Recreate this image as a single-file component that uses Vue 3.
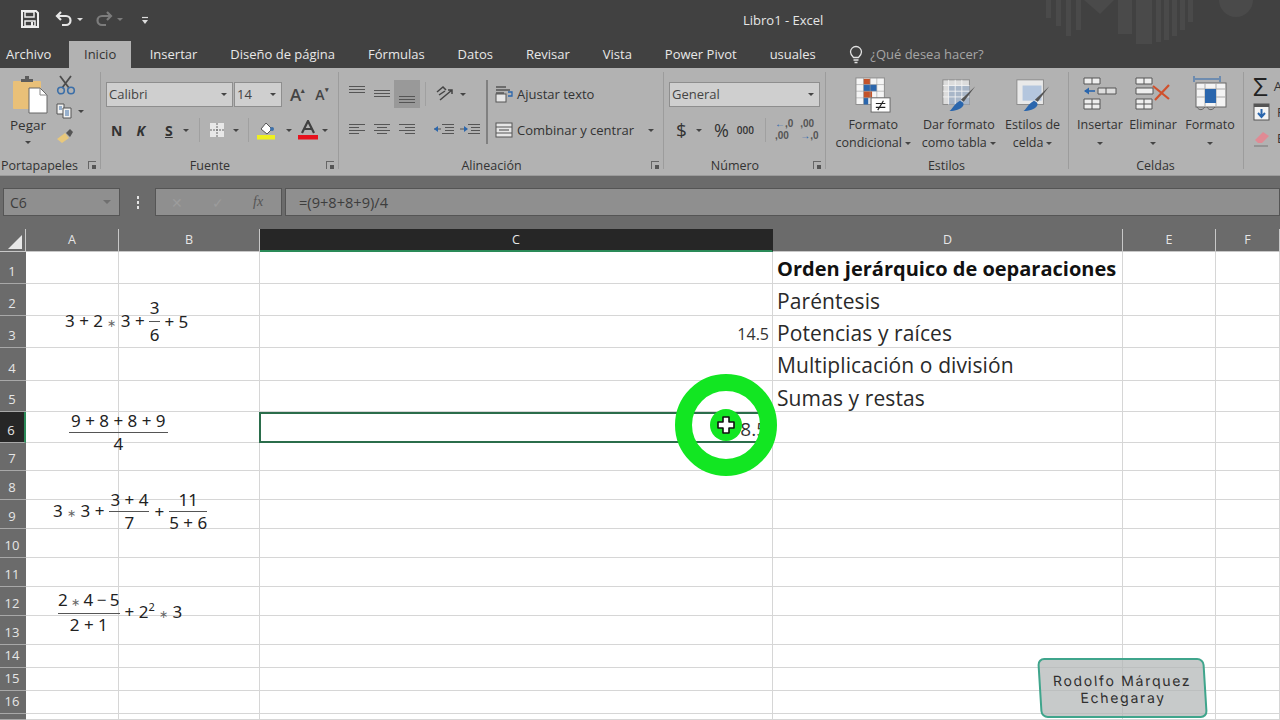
<template>
  <div class="app">
    <header class="titlebar">
      <div class="qat">
        <svg class="q-save" width="20" height="20" viewBox="0 0 20 20"><path d="M2 2h14l2 2v14H2z" fill="none" stroke="#eee" stroke-width="2"/><path d="M5 3h9v5H5zM5 12h10v5H5z" fill="none" stroke="#eee" stroke-width="1.5"/><rect x="11" y="13" width="2" height="4" fill="#eee"/></svg>
        <svg class="q-undo" width="20" height="18" viewBox="0 0 20 18"><path d="M7 2 3 6l4 4M3 6h9a4.5 4.5 0 0 1 0 9H8" fill="none" stroke="#e6e6e6" stroke-width="2.2"/></svg>
        <span class="mini-caret"></span>
        <svg class="q-redo" width="20" height="18" viewBox="0 0 20 18"><path d="M13 2l4 4-4 4M17 6H8a4.5 4.5 0 0 0 0 9h4" fill="none" stroke="#7c7c7c" stroke-width="2.2"/></svg>
        <span class="mini-caret dim"></span>
        <svg class="q-more" width="8" height="9" viewBox="0 0 8 9"><path d="M1 1.5h6" stroke="#ddd" stroke-width="1.2"/><path d="M1 4h6L4 8z" fill="#ddd"/></svg>
      </div>
      <div class="doc-title">Libro1 - Excel</div>
      <svg class="deco" width="240" height="46" viewBox="0 0 240 46">
        <g fill="#4a4a4a">
          <rect x="6" y="0" width="5" height="18"/><rect x="16" y="0" width="5" height="26"/><rect x="26" y="0" width="5" height="36"/><rect x="36" y="0" width="5" height="30"/>
          <path d="M44 0h30l-14 14z"/>
          <rect x="78" y="0" width="14" height="34"/><rect x="96" y="0" width="16" height="44"/><rect x="116" y="0" width="5" height="42"/><rect x="124" y="0" width="5" height="40"/><rect x="132" y="0" width="5" height="36"/><rect x="140" y="0" width="5" height="30"/><rect x="148" y="0" width="5" height="22"/>
          <circle cx="196" cy="0" r="17"/>
        </g>
      </svg>
    </header>

    <nav class="tabs">
      <span class="tab-file">Archivo</span>
      <span class="tab active">Inicio</span>
      <span v-for="t in tabs" :key="t" class="tab">{{ t }}</span>
      <span class="tell">
        <svg width="14" height="19" viewBox="0 0 14 19"><path d="M4.5 12.5C3 11 1.5 9.5 1.5 7a5.5 5.5 0 0 1 11 0c0 2.5-1.5 4-3 5.5z" fill="none" stroke="#e2e2e2" stroke-width="1.3"/><path d="M4.5 15h5M5.5 17.5h3" stroke="#e2e2e2" stroke-width="1.3"/></svg>
        <em>¿Qué desea hacer?</em>
      </span>
    </nav>

    <section class="ribbon">
      <div class="group g-clip">
        <div class="clip-body">
          <div class="paste">
            <svg width="36" height="38" viewBox="0 0 36 38">
              <rect x="1" y="5" width="28" height="28" rx="1" fill="#e9c078"/>
              <path d="M9 6V3h4V0h4v3h4v3z" fill="#5c5c5c"/>
              <path d="M17 12h11l7 7v18H17z" fill="#fff" stroke="#666"/>
              <path d="M28 12v7h7" fill="none" stroke="#888"/>
            </svg>
            <span>Pegar</span>
            <i class="caret"></i>
          </div>
          <div class="clip-tools">
            <svg width="20" height="20" viewBox="0 0 20 20"><path d="M4 1l9 12M15 1 6 13" stroke="#4d4d4d" stroke-width="1.8"/><circle cx="5" cy="15.5" r="3.3" fill="none" stroke="#3c6fa8" stroke-width="1.6"/><circle cx="15" cy="15.5" r="3.3" fill="none" stroke="#3c6fa8" stroke-width="1.6"/></svg>
            <div class="copy-row">
              <svg width="16" height="16" viewBox="0 0 16 16"><path d="M1 1h7v10H1z" fill="#f2f2f2" stroke="#555"/><path d="M7 5h8v10H7z" fill="#f2f2f2" stroke="#555"/><path d="M9 8h4M9 10h4M9 12h4M3 4h3M3 6h3" stroke="#3c6fa8"/></svg>
              <i class="caret"></i>
            </div>
            <svg width="20" height="17" viewBox="0 0 20 17"><path d="M1 12l8-6 4 5-7 5z" fill="#e8c87c"/><path d="M10 6l4-4 3 3-3 5z" fill="#555"/></svg>
          </div>
        </div>
        <div class="group-label left">Portapapeles<i class="launcher"></i></div>
      </div>

      <div class="group g-font">
        <div class="row r1">
          <div class="select s-font">Calibri<i class="caret"></i></div>
          <div class="select s-size">14<i class="caret"></i></div>
          <span class="grow-a">A<sup>▴</sup></span>
          <span class="shrink-a">A<sup>▾</sup></span>
        </div>
        <div class="row r2">
          <b class="fmt f-n">N</b>
          <b class="fmt f-k">K</b>
          <b class="fmt f-s">S</b>
          <i class="caret c1"></i>
          <span class="vsep v1"></span>
          <svg class="ic-border" width="16" height="16" viewBox="0 0 16 16"><rect x="1" y="1" width="14" height="14" fill="#e8e8e8"/><path d="M8 1v14M1 8h14" stroke="#666" stroke-dasharray="2 1"/></svg>
          <i class="caret c2"></i>
          <span class="vsep v2"></span>
          <svg class="ic-fill" width="20" height="20" viewBox="0 0 20 20"><path d="M5 9l5-6 6 6-5 5z" fill="#fff" stroke="#555"/><circle cx="16" cy="9" r="2" fill="#3c6fa8"/><rect x="1" y="15" width="18" height="4.5" fill="#eef020"/></svg>
          <i class="caret c3"></i>
          <svg class="ic-color" width="20" height="20" viewBox="0 0 20 20"><path d="M4 13 10 1l6 12M6.5 9h7" fill="none" stroke="#404040" stroke-width="2.2"/><rect x="0" y="15" width="20" height="4.5" fill="#e8101c"/></svg>
          <i class="caret c4"></i>
        </div>
        <div class="group-label shift">Fuente<i class="launcher"></i></div>
      </div>

      <div class="group g-align">
        <div class="align-body">
          <div class="align-left">
            <div class="row r1">
              <svg class="lines" width="16" height="22" viewBox="0 0 16 22"><path d="M0 3.5h16M0 6.5h16M0 9.5h16" stroke="#555" stroke-width="1"/></svg>
              <svg class="lines" width="16" height="22" viewBox="0 0 16 22"><path d="M0 7.5h16M0 10.5h16M0 13.5h16" stroke="#555" stroke-width="1"/></svg>
              <span class="active-tool"><svg class="lines" width="16" height="22" viewBox="0 0 16 22"><path d="M0 13.5h16M0 16.5h16M0 19.5h16" stroke="#555" stroke-width="1"/></svg></span>
              <span class="vsep v3"></span>
              <svg class="ic-orient" width="20" height="18" viewBox="0 0 20 18"><path d="M2 7l6-5 3 3M4 10l6-4M5 15 17 5M13 5h4v4" fill="none" stroke="#444" stroke-width="1.5"/></svg>
              <i class="caret"></i>
            </div>
            <div class="row r2">
              <svg class="lines" width="16" height="14" viewBox="0 0 16 14"><path d="M0 1.5h16M0 4.5h10M0 7.5h16M0 10.5h10" stroke="#555"/></svg>
              <svg class="lines" width="16" height="14" viewBox="0 0 16 14"><path d="M0 1.5h16M3 4.5h10M0 7.5h16M3 10.5h10" stroke="#555"/></svg>
              <svg class="lines" width="16" height="14" viewBox="0 0 16 14"><path d="M0 1.5h16M6 4.5h10M0 7.5h16M6 10.5h10" stroke="#555"/></svg>
              <svg class="ic-indent" width="20" height="14" viewBox="0 0 20 14"><path d="M8 1.5h12M11 4.5h9M11 7.5h9M8 10.5h12M0 6h7" stroke="#555"/><path d="M0 6l4-3v6z" fill="#2a66ad"/></svg>
              <svg class="ic-indent2" width="20" height="14" viewBox="0 0 20 14"><path d="M8 1.5h12M11 4.5h9M11 7.5h9M8 10.5h12M0 6h6" stroke="#555"/><path d="M8 6 4 3v6z" fill="#2a66ad"/></svg>
            </div>
          </div>
          <span class="align-sep"></span>
          <div class="align-right">
            <div class="row r1 cmd">
              <svg width="18" height="18" viewBox="0 0 18 18"><path d="M1 2h10M1 5h14M1 8h8" stroke="#555" stroke-width="1.3"/><rect x="1" y="9" width="10" height="8" fill="#e6e6e6" stroke="#555"/><path d="M13 7h4v4h-4" fill="none" stroke="#2a66ad" stroke-width="1.3"/></svg>
              <span>Ajustar texto</span>
            </div>
            <div class="row r2 cmd">
              <svg width="18" height="16" viewBox="0 0 18 16"><rect x="1" y="1" width="16" height="14" fill="#e6e6e6" stroke="#555"/><path d="M1 5h16M1 11h16" stroke="#555"/><path d="M4 8h10" stroke="#444"/></svg>
              <span>Combinar y centrar</span>
              <i class="caret c-merge"></i>
            </div>
          </div>
        </div>
        <div class="group-label shift">Alineación<i class="launcher"></i></div>
      </div>

      <div class="group g-num">
        <div class="row r1"><div class="select s-num">General<i class="caret"></i></div></div>
        <div class="row r2">
          <span class="n-dollar">$</span>
          <i class="caret"></i>
          <span class="n-pct">%</span>
          <span class="n-mil">000</span>
          <span class="vsep v4"></span>
          <span class="n-dec"><u>←</u>,0<br>,00</span>
          <span class="n-dec two">,00<br><u>→</u>,0</span>
        </div>
        <div class="group-label shift">Número<i class="launcher"></i></div>
      </div>

      <div class="group g-styles">
        <div class="big-row">
          <div class="big b-cond">
            <svg width="36" height="36" viewBox="0 0 38 38">
              <rect x="1" y="1" width="30" height="28" fill="#f5f5f5" stroke="#8a8a8a"/>
              <rect x="9" y="2" width="7" height="6" fill="#c4532a"/><rect x="9" y="8" width="14" height="7" fill="#2a66ad"/><rect x="9" y="15" width="9" height="7" fill="#c4532a"/><rect x="9" y="22" width="5" height="7" fill="#2a66ad"/>
              <path d="M1 8h30M1 15h30M1 22h30M9 1v28M16 1v28M23 1v28" stroke="#9a9a9a" stroke-width=".6"/>
              <rect x="17" y="22" width="20" height="15" fill="#fff" stroke="#666"/>
              <path d="M22 28h10M22 32h10M30 25l-6 10" stroke="#222" stroke-width="1.2"/>
            </svg>
            <span>Formato</span><span class="wide">condicional<i class="caret"></i></span>
          </div>
          <div class="big b-table">
            <svg width="36" height="36" viewBox="0 0 38 38">
              <rect x="2" y="3" width="28" height="26" fill="#dcdcdc" stroke="#8a8a8a"/>
              <rect x="8" y="9" width="22" height="20" fill="#a8b6c8"/>
              <path d="M2 9h28M2 15h28M2 21h28M8 3v26M15 3v26M22 3v26" stroke="#f4f4f4" stroke-width=".9"/>
              <path d="M36 10 24 26l-3-2z" fill="#555"/><path d="M20 25c3 1 5 3 3 6-2 3-8 5-14 5 3-2 4-7 11-11z" fill="#2a66ad"/>
            </svg>
            <span>Dar formato</span><span class="wide">como tabla<i class="caret"></i></span>
          </div>
          <div class="big b-cell">
            <svg width="36" height="36" viewBox="0 0 38 38">
              <rect x="2" y="3" width="28" height="26" fill="#e9e9e9" stroke="#8a8a8a"/>
              <rect x="8" y="9" width="20" height="16" fill="#b4c6de"/>
              <path d="M36 10 24 26l-3-2z" fill="#555"/><path d="M20 25c3 1 5 3 3 6-2 3-8 5-14 5 3-2 4-7 11-11z" fill="#2a66ad"/>
            </svg>
            <span>Estilos de</span><span class="wide">celda<i class="caret"></i></span>
          </div>
        </div>
        <div class="group-label">Estilos</div>
      </div>

      <div class="group g-cells">
        <div class="big-row">
          <div class="big b-ins">
            <svg width="34" height="34" viewBox="0 0 34 34">
              <path d="M1 1h16v6H1zM9 1v6M1 22h16v10H1zM1 27h16M9 22v10" fill="#eee" stroke="#555"/>
              <path d="M15 11h18v6H15zM23 11v6" fill="#ddd" stroke="#555"/>
              <path d="M2 14h10" stroke="#2a66ad" stroke-width="1.6"/><path d="M1 14l5-3.5v7z" fill="#2a66ad"/>
            </svg>
            <span>Insertar</span><i class="caret"></i>
          </div>
          <div class="big b-del">
            <svg width="36" height="34" viewBox="0 0 36 34">
              <path d="M1 1h16v6H1zM9 1v6M1 22h16v10H1zM1 27h16M9 22v10M1 11h17v6H1z" fill="#eee" stroke="#555"/>
              <path d="M18 9 34 22M34 8 20 23" stroke="#d0502c" stroke-width="2.2"/>
            </svg>
            <span>Eliminar</span><i class="caret"></i>
          </div>
          <div class="big b-form">
            <svg width="34" height="38" viewBox="0 0 34 38">
              <path d="M1 1v6M27 1v6M2 4h24" stroke="#2a66ad"/>
              <rect x="3" y="8" width="30" height="24" fill="#f4f4f4" stroke="#666"/>
              <path d="M3 14h30M3 22h30M12 8v24M23 8v24" stroke="#aaa"/>
              <rect x="12" y="14" width="11" height="14" fill="#2a66ad"/>
              <path d="M4 32c2 4 6 3 8 0M14 32c2 4 6 3 8 0" fill="none" stroke="#666"/>
            </svg>
            <span>Formato</span><i class="caret"></i>
          </div>
        </div>
        <div class="group-label">Celdas</div>
      </div>

      <div class="group g-edit">
        <div class="edit-line e1"><span class="sigma">Σ</span><span>A</span></div>
        <div class="edit-line">
          <svg width="18" height="18" viewBox="0 0 18 18"><rect x="1" y="1" width="15" height="16" fill="#f4f4f4" stroke="#555"/><rect x="1" y="1" width="15" height="3" fill="#555"/><path d="M8.5 6v7M5 10l3.5 4 3.5-4" fill="none" stroke="#2a66ad" stroke-width="2"/></svg>
          <span>R</span>
        </div>
        <div class="edit-line">
          <svg width="18" height="18" viewBox="0 0 18 18"><path d="M2 11 10 3l6 4-7 7H5z" fill="#e08a94"/><path d="M1 17h14" stroke="#777"/></svg>
          <span>B</span>
        </div>
      </div>
    </section>

    <section class="formula-bar">
      <div class="name-box">C6<i class="caret dark"></i></div>
      <div class="dots"><i></i><i></i><i></i></div>
      <div class="fx-box">
        <span class="fx-x">✕</span>
        <span class="fx-ok">✓</span>
        <span class="fx">fx</span>
      </div>
      <div class="formula">=(9+8+8+9)/4</div>
    </section>

    <section class="sheet-wrap">
      <div class="sheet">
        <div class="corner"><span class="tri"></span></div>
        <div v-for="c in cols" :key="c" class="col-head" :class="{ sel: c === 'C' }">{{ c }}</div>
        <template v-for="r in rows" :key="r">
          <div class="row-head" :class="{ sel: r === 6 }">{{ r < 17 ? r : '' }}</div>
          <div v-for="c in cols" :key="c" class="cell" :class="[cellClass(r, c)]">{{ cellText(r, c) }}</div>
        </template>
      </div>

      <!-- equations are pictures floating above the grid -->
      <div class="eq eq1">
        <span>3 + 2 <i class="star">∗</i> 3 +</span>
        <span class="frac small"><span>3</span><span>6</span></span>
        <span>+ 5</span>
      </div>
      <div class="eq eq2">
        <span class="frac"><span>9 + 8 + 8 + 9</span><span>4</span></span>
      </div>
      <div class="eq eq3">
        <span>3 <i class="star">∗</i> 3 +</span>
        <span class="frac"><span>3 + 4</span><span>7</span></span>
        <span>+</span>
        <span class="frac"><span>11</span><span>5 + 6</span></span>
      </div>
      <div class="eq eq4">
        <span class="frac"><span>2 <i class="star">∗</i> 4 − 5</span><span>2 + 1</span></span>
        <span>+ 2<sup>2</sup> <i class="star">∗</i> 3</span>
      </div>

      <div class="click-ring">
        <span class="click-dot"></span>
        <svg class="cross" width="20" height="20" viewBox="0 0 20 20"><path d="M7 2h6v5h5v6h-5v5H7v-5H2V7h5z" fill="#fff" stroke="#111" stroke-width="1.6" stroke-linejoin="round"/></svg>
      </div>

      <div class="stamp">Rodolfo Márquez<br>Echegaray</div>
    </section>
  </div>
</template>

<script setup>
const tabs = ['Insertar', 'Diseño de página', 'Fórmulas', 'Datos', 'Revisar', 'Vista', 'Power Pivot', 'usuales']
const cols = ['A', 'B', 'C', 'D', 'E', 'F']
const rows = Array.from({ length: 17 }, (_, i) => i + 1)

const texts = {
  D1: 'Orden jerárquico de oeparaciones',
  D2: 'Paréntesis',
  D3: 'Potencias y raíces',
  C3: '14.5',
  D4: 'Multiplicación o división',
  D5: 'Sumas y restas',
  C6: '8.5'
}

const cellText = (r, c) => texts[c + r] || ''

const cellClass = (r, c) => {
  if (c + r === 'D1') return 'list bold'
  if (c === 'D' && r < 6) return 'list'
  if (c + r === 'C3') return 'num'
  if (c + r === 'C6') return 'num current'
  return ''
}
</script>

<style scoped>
.app {
  width: 1280px;
  height: 720px;
  overflow: hidden;
  font-family: "Open Sans", "Noto Sans", sans-serif;
  background: #6b6b6b;
  display: flex;
  flex-direction: column;
}

.titlebar {
  position: relative;
  height: 38px;
  flex: none;
  background: #414141;
  display: flex;
  align-items: center;
}

.qat {
  display: flex;
  align-items: center;
  padding-left: 20px;
}

.q-undo { margin-left: 14px; }
.q-redo { margin-left: 11px; }
.q-more { margin-left: 18px; margin-top: 2px; }

.mini-caret {
  width: 0;
  height: 0;
  margin-left: 3px;
  border-left: 3px solid transparent;
  border-right: 3px solid transparent;
  border-top: 3px solid #ddd;
}

.mini-caret.dim { border-top-color: #7c7c7c; }

.doc-title {
  position: absolute;
  left: 743px;
  top: 11px;
  font-size: 13px;
  color: #e6e6e6;
}

.deco {
  position: absolute;
  left: 1040px;
  top: 0;
}

.tabs {
  height: 30px;
  flex: none;
  background: #414141;
  display: flex;
  align-items: flex-end;
  color: #e8e8e8;
  font-size: 13px;
  line-height: 27px;
}

.tab-file {
  width: 69px;
  padding-left: 6px;
  box-sizing: border-box;
}

.tab { padding: 0 16.5px; height: 27px; }

.tab.active {
  background: #b2b2b2;
  color: #333;
  padding: 0 15px;
  margin-right: 2px;
}

.tell {
  display: flex;
  align-items: center;
  gap: 7px;
  margin-left: 17px;
  color: #a6a6a6;
}

.tell em { font-style: normal; }

.ribbon {
  height: 108px;
  flex: none;
  background: #b2b2b2;
  border-bottom: 1px solid #9b9b9b;
  box-sizing: border-box;
  display: flex;
  color: #333;
  font-size: 12.5px;
}

.group {
  position: relative;
  flex: none;
  padding-top: 13px;
  box-sizing: border-box;
}

.group::after {
  content: "";
  position: absolute;
  right: -1px;
  top: 4px;
  bottom: 6px;
  width: 1px;
  background: #9c9c9c;
}

.g-edit::after { display: none; }

.g-clip { width: 100px; padding-top: 4px; }
.g-font { width: 238px; }
.g-align { width: 325px; }
.g-num { width: 162px; }
.g-styles { width: 243px; padding-top: 9px; }
.g-cells { width: 175px; padding-top: 9px; }
.g-edit { flex: 1; padding: 5px 0 0 10px; }

.group-label {
  position: absolute;
  left: 0;
  right: 0;
  bottom: 1px;
  height: 17px;
  line-height: 17px;
  text-align: center;
  font-size: 12.5px;
}

.group-label.left { text-align: left; padding-left: 1px; }
.group-label.shift { padding-right: 18px; }

.launcher {
  position: absolute;
  right: 4px;
  top: 4px;
  width: 7px;
  height: 7px;
  border-left: 1px solid #666;
  border-top: 1px solid #666;
}

.launcher::after {
  content: "";
  position: absolute;
  right: 0;
  bottom: 0;
  width: 4px;
  height: 4px;
  background: #555;
}

.caret {
  display: inline-block;
  width: 0;
  height: 0;
  border-left: 3px solid transparent;
  border-right: 3px solid transparent;
  border-top: 3px solid #444;
  flex: none;
}

.row {
  display: flex;
  align-items: center;
  height: 26px;
}

.r1 { margin-bottom: 10px; }

/* portapapeles */
.clip-body {
  display: flex;
  padding-left: 10px;
}

.paste {
  width: 36px;
  display: flex;
  flex-direction: column;
  align-items: center;
  font-size: 13.5px;
  padding-top: 4px;
}

.paste svg { margin-left: 4px; flex: none; }
.paste span { margin-top: 2px; line-height: 18px; }
.paste .caret { margin-top: 7px; }

.clip-tools {
  display: flex;
  flex-direction: column;
  gap: 8px;
  margin-left: 10px;
  padding-top: 3px;
}

.copy-row {
  display: flex;
  align-items: center;
  gap: 6px;
}

/* fuente */
.select {
  position: relative;
  height: 25px;
  box-sizing: border-box;
  background: #cfcfcf;
  border: 1px solid #8e8e8e;
  line-height: 22px;
  padding-left: 2px;
  font-size: 13px;
  color: #444;
}

.select .caret {
  position: absolute;
  right: 5px;
  top: 10px;
}

.g-font .r1, .g-font .r2 { padding-left: 6px; }
.s-font { width: 127px; }
.s-size { width: 48px; margin-left: 1px; }

.grow-a, .shrink-a {
  font-weight: 600;
  color: #444;
  line-height: 1;
}

.grow-a { font-size: 17px; margin-left: 8px; }
.shrink-a { font-size: 14px; margin-left: 10px; }
.grow-a sup, .shrink-a sup { font-size: 7px; vertical-align: 8px; }

.fmt {
  font-size: 14px;
  font-weight: 700;
  color: #333;
}

.f-n { margin-left: 5px; }
.f-k { margin-left: 14px; font-style: italic; }
.f-s { margin-left: 20px; text-decoration: underline; }
.c1 { margin-left: 10px; }
.c2 { margin-left: 8px; }
.c3 { margin-left: 10px; }
.c4 { margin-left: 4px; }

.vsep {
  width: 1px;
  height: 24px;
  background: #a0a0a0;
}

.v1 { margin-left: 10px; }
.v2 { margin-left: 9px; }
.ic-border { margin-left: 9px; }
.ic-fill { margin-left: 7px; }
.ic-color { margin-left: 6px; }

/* alineacion */
.align-body { display: flex; }

.align-left .r1, .align-left .r2 { padding-left: 11px; }
.align-left .lines { margin-right: 9px; flex: none; }
.align-left { width: 148px; }

.active-tool {
  display: flex;
  justify-content: center;
  width: 26px;
  height: 28px;
  background: #999;
  margin-left: -5px;
  align-items: center;
}

.align-left .active-tool .lines { margin: 0; }

.v3 { margin-left: 5px; }
.ic-orient { margin-left: 9px; }
.g-align .r1 .caret { margin-left: 5px; }
.ic-indent { margin-left: 10px; }
.ic-indent2 { margin-left: 6px; }

.align-sep {
  width: 2px;
  height: 64px;
  margin-top: -1px;
  background: #808080;
}

.align-right { padding-left: 7px; }

.cmd {
  gap: 4px;
  font-size: 13px;
  white-space: nowrap;
}

.c-merge { margin-left: 10px; }

/* numero */
.g-num .r1, .g-num .r2 { padding-left: 6px; }
.s-num { width: 151px; }

.n-dollar { font-size: 19px; margin-left: 7px; }
.g-num .r2 .caret { margin-left: 9px; }
.n-pct { font-size: 18px; margin-left: 12px; }
.n-mil { font-size: 10px; margin-left: 8px; font-weight: 600; }
.v4 { margin-left: 11px; }

.n-dec {
  font-family: "Liberation Sans", sans-serif;
  font-size: 10px;
  line-height: 12px;
  margin-left: 9px;
  white-space: nowrap;
  color: #555;
  font-weight: 700;
}

.n-dec.two { margin-left: 7px; }
.n-dec u { text-decoration: none; color: #2a66ad; }

/* botones grandes */
.big-row { display: flex; }

.big {
  display: flex;
  flex-direction: column;
  align-items: center;
  line-height: 18px;
  white-space: nowrap;
  font-size: 12.5px;
}

.big svg { margin-bottom: 3px; flex: none; }
.big .caret { margin-left: 3px; vertical-align: 2px; }
.big > .caret { margin: 8px 0 0; }

.b-cond { width: 96px; margin-left: 1px; }
.b-table { width: 78px; }
.b-cell { width: 72px; }
.wide { display: block; }

.g-cells .big svg { margin-bottom: 5px; }
.g-cells .b-form svg { margin-top: -2px; margin-bottom: 3px; }
.b-ins { width: 58px; margin-left: 3px; }
.b-del { width: 48px; }
.b-form { width: 62px; margin-left: 2px; }

/* edicion */
.edit-line {
  display: flex;
  align-items: center;
  gap: 6px;
  height: 26px;
  font-size: 13px;
}

.sigma { font-size: 26px; line-height: 1; color: #222; }

/* barra de formulas */
.formula-bar {
  height: 53px;
  flex: none;
  box-sizing: border-box;
  background: #6b6b6b;
  padding: 12px 0 13px 3px;
  display: flex;
  align-items: stretch;
}

.name-box, .fx-box, .formula {
  background: #8f8f8f;
  border: 1px solid #555;
  box-sizing: border-box;
  color: #3d3d3d;
  font-size: 13px;
}

.name-box {
  position: relative;
  width: 117px;
  line-height: 27px;
  padding-left: 6px;
  font-size: 14px;
}

.name-box .caret {
  position: absolute;
  right: 8px;
  top: 11px;
  border-top-color: #6f6f6f;
  border-left-width: 4px;
  border-right-width: 4px;
  border-top-width: 4px;
}

.dots {
  width: 35px;
  display: flex;
  flex-direction: column;
  align-items: center;
  justify-content: center;
  gap: 2px;
}

.dots i {
  width: 2px;
  height: 3px;
  background: #e4e4e4;
}

.fx-box {
  width: 127px;
  display: flex;
  align-items: center;
  color: #9c9c9c;
  font-size: 14px;
}

.fx-x { margin-left: 15px; }
.fx-ok { margin-left: 29px; }

.fx {
  margin-left: 29px;
  color: #555;
  font-family: "Liberation Serif", serif;
  font-style: italic;
}

.formula {
  flex: 1;
  margin-left: 3px;
  line-height: 27px;
  padding-left: 13px;
  font-size: 14.6px;
}

/* hoja */
.sheet-wrap {
  position: relative;
  flex: 1;
  background: #fff;
}

.sheet {
  display: grid;
  grid-template-columns: 26px 93px 141px 513px 350px 93px 64px;
  grid-template-rows: 23px 31.5px 32.5px 32px 32.5px 31.5px 31px 28px repeat(6, 29px) 23px 23px 23px 6px;
}

.corner {
  position: relative;
  background: #6b6b6b;
  border-right: 1px solid #c8c8c8;
  border-bottom: 1px solid #c8c8c8;
  box-sizing: border-box;
}

.tri {
  position: absolute;
  right: 3px;
  bottom: 2px;
  width: 0;
  height: 0;
  border-left: 14px solid transparent;
  border-bottom: 14px solid #e8e8e8;
}

.col-head {
  background: #6b6b6b;
  color: #e6e6e6;
  font-size: 12.5px;
  line-height: 21px;
  text-align: center;
  border-right: 1px solid #c8c8c8;
  border-bottom: 1px solid #c8c8c8;
  box-sizing: border-box;
}

.col-head.sel {
  background: #262626;
  border-bottom: 2px solid #2a8a58;
  border-right-color: #262626;
}

.row-head {
  background: #6b6b6b;
  color: #e6e6e6;
  font-size: 13px;
  line-height: 18px;
  display: flex;
  align-items: flex-end;
  justify-content: center;
  padding: 0 2px 3px 0;
  border-bottom: 1px solid #a8a8a8;
  box-sizing: border-box;
}

.row-head.sel {
  background: #262626;
  border-right: 2px solid #2a8a58;
}

.cell {
  background: #fff;
  border-right: 1px solid #d6d6d6;
  border-bottom: 1px solid #d6d6d6;
  box-sizing: border-box;
  min-width: 0;
  white-space: nowrap;
  color: #222;
}

.cell.list {
  font-size: 21px;
  line-height: 34px;
  padding-left: 4px;
  color: #2a2a2a;
  letter-spacing: 0.1px;
}

.cell.bold { font-weight: 700; color: #111; font-size: 20px; line-height: 34px; letter-spacing: 0; }

.cell.num {
  text-align: right;
  padding-right: 3px;
  font-size: 16px;
  line-height: 37px;
  color: #333;
}

.cell.current {
  border: 2px solid #2b6d4b;
  margin: 0 -2px 0 -1px;
  font-size: 19px;
  line-height: 31px;
  padding-right: 6px;
}

.eq {
  position: absolute;
  display: flex;
  align-items: center;
  gap: 3px;
  font-family: "Noto Sans", sans-serif;
  font-size: 17px;
  line-height: 21px;
  color: #222;
  white-space: nowrap;
}

.eq1 { left: 65px; top: 66px; gap: 4px; }
.eq2 { left: 69px; top: 181px; }
.eq3 { left: 53px; top: 260px; gap: 5px; }
.eq4 { left: 58px; top: 360px; gap: 5px; }

.eq2 .frac > span:first-child { padding: 0 2px 1px; }
.eq4 .frac > span:first-child { word-spacing: -1px; padding: 0 0 1px; }

.eq sup { font-size: 11px; line-height: 0; }

.star {
  font-style: normal;
  font-size: 11px;
  color: #666;
}

.frac {
  display: inline-flex;
  flex-direction: column;
  align-items: center;
}

.frac > span:first-child {
  align-self: stretch;
  text-align: center;
  padding: 0 1px 1px;
  border-bottom: 1.5px solid #555;
}

.frac.small { line-height: 25px; }

.click-ring {
  position: absolute;
  left: 675px;
  top: 145px;
  width: 102px;
  height: 102px;
  box-sizing: border-box;
  border: 17px solid #12e622;
  border-radius: 50%;
  display: flex;
  align-items: center;
  justify-content: center;
}

.click-dot {
  width: 32px;
  height: 32px;
  border-radius: 50%;
  background: #12e622;
}

.cross { position: absolute; }

.stamp {
  position: absolute;
  left: 1039px;
  top: 429px;
  width: 167px;
  height: 60px;
  box-sizing: border-box;
  padding-top: 12px;
  transform: skewX(3.5deg);
  border: 2px solid #3fa58c;
  border-radius: 7px;
  background: rgba(178, 182, 182, 0.72);
  font-family: Inter, "Open Sans", sans-serif;
  font-size: 14px;
  line-height: 17px;
  letter-spacing: 1.7px;
  text-align: center;
  color: #2f2f2f;
}
</style>

<style>
html, body {
  margin: 0;
  overflow: hidden;
}
</style>
